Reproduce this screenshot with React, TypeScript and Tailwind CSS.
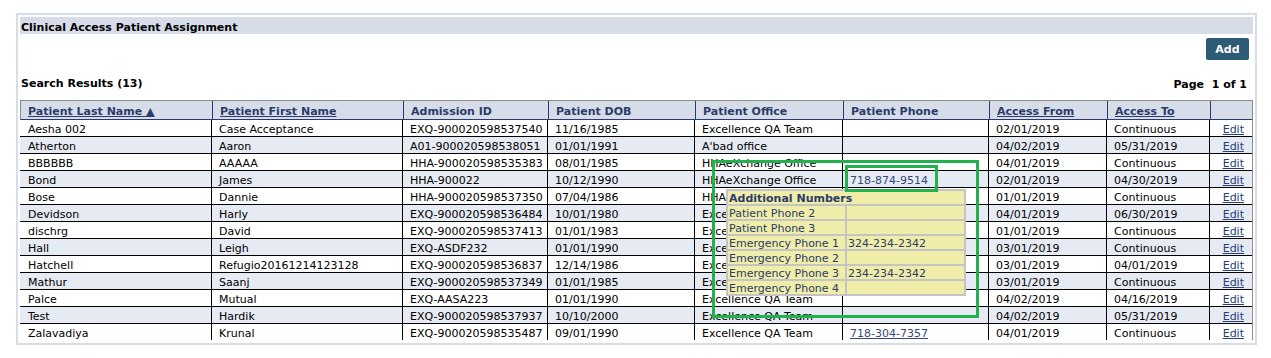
import React from "react";

type Row = [string, string, string, string, string, string, string, string];

const rows: Row[] = [
  ["Aesha 002", "Case Acceptance", "EXQ-900020598537540", "11/16/1985", "Excellence QA Team", "", "02/01/2019", "Continuous"],
  ["Atherton", "Aaron", "A01-900020598538051", "01/01/1991", "A'bad office", "", "04/02/2019", "05/31/2019"],
  ["BBBBBB", "AAAAA", "HHA-900020598535383", "08/01/1985", "HHAeXchange Office", "", "04/01/2019", "Continuous"],
  ["Bond", "James", "HHA-900022", "10/12/1990", "HHAeXchange Office", "718-874-9514", "02/01/2019", "04/30/2019"],
  ["Bose", "Dannie", "HHA-900020598537350", "07/04/1986", "HHAeXchange Office", "", "01/01/2019", "Continuous"],
  ["Devidson", "Harly", "EXQ-900020598536484", "10/01/1980", "Excellence QA Team", "", "04/01/2019", "06/30/2019"],
  ["dischrg", "David", "EXQ-900020598537413", "01/01/1983", "Excellence QA Team", "", "01/01/2019", "Continuous"],
  ["Hall", "Leigh", "EXQ-ASDF232", "01/01/1990", "Excellence QA Team", "", "03/01/2019", "Continuous"],
  ["Hatchell", "Refugio20161214123128", "EXQ-900020598536837", "12/14/1986", "Excellence QA Team", "", "03/01/2019", "04/01/2019"],
  ["Mathur", "Saanj", "EXQ-900020598537349", "01/01/1985", "Excellence QA Team", "", "03/01/2019", "Continuous"],
  ["Palce", "Mutual", "EXQ-AASA223", "01/01/1990", "Excellence QA Team", "", "04/02/2019", "04/16/2019"],
  ["Test", "Hardik", "EXQ-900020598537937", "10/10/2000", "Excellence QA Team", "", "04/02/2019", "05/31/2019"],
  ["Zalavadiya", "Krunal", "EXQ-900020598535487", "09/01/1990", "Excellence QA Team", "718-304-7357", "04/01/2019", "Continuous"],
];

const headers: { label: string; link: boolean }[] = [
  { label: "Patient Last Name \u25B2", link: true },
  { label: "Patient First Name", link: true },
  { label: "Admission ID", link: false },
  { label: "Patient DOB", link: false },
  { label: "Patient Office", link: false },
  { label: "Patient Phone", link: false },
  { label: "Access From", link: true },
  { label: "Access To", link: true },
  { label: "", link: false },
];

const GRID = "grid grid-cols-[191px_191px_145px_147px_148px_146px_118px_103px_43px]";

const tipRows: [string, string][] = [
  ["Patient Phone 2", ""],
  ["Patient Phone 3", ""],
  ["Emergency Phone 1", "324-234-2342"],
  ["Emergency Phone 2", ""],
  ["Emergency Phone 3", "234-234-2342"],
  ["Emergency Phone 4", ""],
];

export default function App() {
  return (
    <div className="relative w-[1271px] h-[358px] bg-white font-['Verdana','DejaVu_Sans',sans-serif] text-[11px] text-black overflow-hidden">
      <div className="absolute left-[16px] top-[13px] w-[1241px] border-2 border-[#d6dce8] p-[2px] pb-[3px]">
        <div className="h-[17px] bg-[#d6dce8] pl-[1px] pt-[4px] font-bold leading-[13px] text-black">
          Clinical Access Patient Assignment
        </div>
        <div className="flex justify-end pr-[4px] mt-[4px]">
          <button className="w-[43px] h-[22px] rounded-[2px] bg-[#2d5a75] text-white font-bold pt-[2px] leading-[20px] text-center">
            Add
          </button>
        </div>
        <div className="flex justify-between items-start h-[15px] mt-[15px] pl-[1px] pr-[6px] font-bold leading-[15px]">
          <span className="mt-[1px]">Search Results (13)</span>
          <span className="mt-[2px]">Page&nbsp; 1 of 1</span>
        </div>
        <div className="mt-[10px] border-t border-r border-[#8c8c8c]">
          <div className={`${GRID} h-[19px] bg-[#d6dce8] border-b border-[#2b3c6c] border-l border-l-[#8c8c8c]`}>
            {headers.map((h, i) => (
              <div
                key={i}
                className={`${i === 0 ? "pl-[7px]" : "border-l border-[#2b3c6c] pl-[7px]"} h-[18px] pt-[4px] leading-[14px] font-bold text-[#2b3c6c] whitespace-nowrap`}
              >
                {h.link ? <span className="underline">{h.label}</span> : h.label}
              </div>
            ))}
          </div>
          {rows.map((r, ri) => (
            <div
              key={ri}
              className={`${GRID} ${ri < rows.length - 1 ? "h-[17px] border-b border-black" : "h-[16px]"} ${ri % 2 === 1 ? "bg-[#e6eaf2]" : "bg-white"}`}
            >
              {r.map((c, ci) => (
                <div
                  key={ci}
                  className={`${ci === 0 ? "pl-[8px]" : "border-l border-black pl-[7px]"} h-[16px] pt-[4px] leading-[12px] whitespace-nowrap`}
                >
                  {ci === 5 && c ? (
                    <span className={`text-[#34487c] ${ri === 3 ? "" : "underline"}`}>{c}</span>
                  ) : (
                    c
                  )}
                </div>
              ))}
              <div className="border-l border-black text-right pr-[8px] h-[16px] pt-[4px] leading-[12px]">
                <span className="underline text-[#24407a]">Edit</span>
              </div>
            </div>
          ))}
        </div>
      </div>

      {/* Tooltip */}
      <div className="absolute left-[726px] top-[189px] w-[240px] bg-[#c4c4c4] p-[2px] grid grid-cols-[117px_117px] gap-[2px] text-[#2b3c6c] z-10">
        <div className="col-span-2 h-[13px] bg-[#efeda8] pl-[1px] pt-[2px] font-bold leading-[11px]">Additional Numbers</div>
        {tipRows.map(([l, v], i) => (
          <React.Fragment key={i}>
            <div className="h-[13px] bg-[#efeda8] pl-[1px] pt-[2px] leading-[11px] whitespace-nowrap">{l}</div>
            <div className="h-[13px] bg-[#efeda8] pl-[1px] pt-[2px] leading-[11px] whitespace-nowrap">{v}</div>
          </React.Fragment>
        ))}
      </div>

      {/* Annotation rectangles */}
      <div className="absolute left-[712px] top-[160px] w-[267px] h-[158px] border-[3px] border-[#22b14c] z-20" />
      <div className="absolute left-[845px] top-[165px] w-[93px] h-[27px] border-[3px] border-[#22b14c] z-20" />
    </div>
  );
}
